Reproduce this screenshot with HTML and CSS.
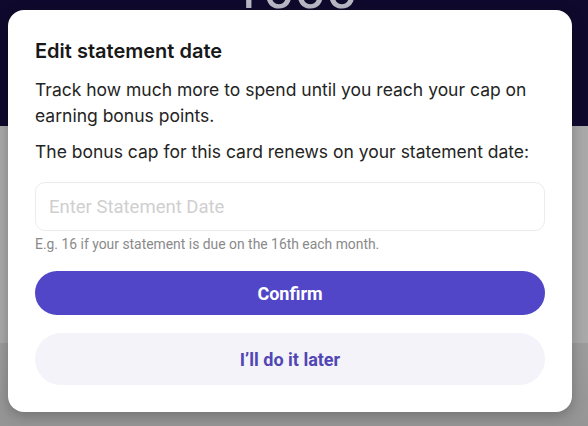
FILE: index.html
```html
<!DOCTYPE html>
<html>
<head>
<meta charset="utf-8">
<link rel="stylesheet" href="styles.css">
</head>
<body>
<div class="page">
  <div class="hero"><div class="hero-num">1000</div></div>
  <div class="content"></div>
  <div class="footer"></div>
</div>
<div class="modal">
  <h2 class="title">Edit statement date</h2>
  <p class="text">Track how much more to spend until you reach your cap on earning bonus points.</p>
  <p class="text second">The bonus cap for this card renews on your statement date:</p>
  <div class="field"><span class="placeholder">Enter Statement Date</span></div>
  <p class="hint">E.g. 16 if your statement is due on the 16th each month.</p>
  <div class="btn primary">Confirm</div>
  <div class="btn secondary">I’ll do it later</div>
</div>
</body>
</html>
```
FILE: styles.css
```css
* { box-sizing: border-box; }
html, body { margin: 0; padding: 0; }
body { width: 588px; height: 426px; overflow: hidden; position: relative; font-family: Inter, "Noto Sans", sans-serif; }
.page { display: flex; flex-direction: column; height: 426px; }
.hero { height: 126px; background: #0f0a2d; overflow: hidden; display: flex; justify-content: center; }
.hero-num { font-family: Roboto, sans-serif; font-size: 58px; color: #b9b9c6; line-height: 1; margin-top: -41px; letter-spacing: -1px; }
.content { height: 217px; background: #a9a9a9; }
.footer { flex: 1; background: linear-gradient(#9c9c9c, #959595); }
.modal { position: absolute; left: 8px; top: 10px; width: 564px; height: 402px; background: #fff; border-radius: 16px; padding: 28px 27px 0 27px; box-shadow: 0 4px 14px rgba(0,0,0,0.25); display: flex; flex-direction: column; }
.title { margin: 0; font-size: 20px; font-weight: 600; color: #181818; line-height: 26px; }
.text { margin: 13px 0 0; font-size: 17.5px; line-height: 26px; color: #242424; }
.text.second { margin-top: 10px; }
.field { margin-top: 17px; height: 49px; border: 1px solid #ececec; border-radius: 10px; display: flex; align-items: center; padding-left: 13px; }
.placeholder { font-family: Roboto, sans-serif; font-size: 18.5px; color: #cfcfcf; }
.hint { margin: 5px 0 0; font-family: Roboto, sans-serif; font-size: 13.9px; color: #8a8a8a; line-height: 16px; }
.btn { display: flex; align-items: center; justify-content: center; border-radius: 26px; font-family: Roboto, sans-serif; font-weight: 700; font-size: 18px; }
.primary { margin-top: 19px; height: 44px; background: #5046c7; color: #fff; }
.secondary { margin-top: 18px; height: 52px; background: #f3f3f9; color: #5046b4; }
```
